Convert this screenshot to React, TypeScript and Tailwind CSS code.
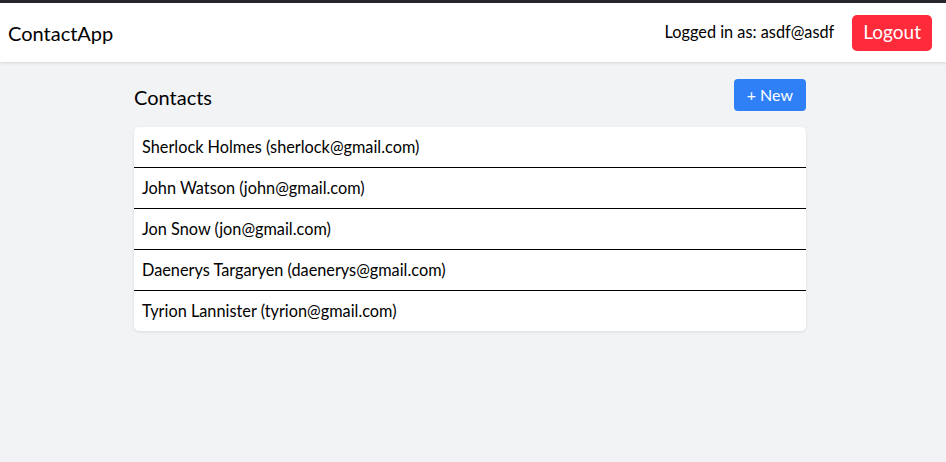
export default function App() {
  const contacts = [
    { name: 'Sherlock Holmes', email: 'sherlock@gmail.com' },
    { name: 'John Watson', email: 'john@gmail.com' },
    { name: 'Jon Snow', email: 'jon@gmail.com' },
    { name: 'Daenerys Targaryen', email: 'daenerys@gmail.com' },
    { name: 'Tyrion Lannister', email: 'tyrion@gmail.com' },
  ]

  return (
    <div className="min-h-[462px] bg-[#f2f3f5] font-['Lato',sans-serif] text-black">
      <div className="h-[3px] bg-[#26262c]" />
      <header className="flex h-[59px] items-center justify-between bg-white pl-2 pr-[14px] shadow-[0_1px_3px_rgba(0,0,0,0.12)]">
        <span className="text-[20px]">ContactApp</span>
        <div className="flex items-center gap-[18px]">
          <span className="text-[16.3px]">Logged in as: asdf@asdf</span>
          <button className="h-[36px] rounded-[5px] bg-[#ff2b3b] px-[11px] text-[19px] text-white">Logout</button>
        </div>
      </header>

      <main className="ml-[134px] w-[672px] pt-[17px]">
        <div className="flex h-[32px] items-start justify-between">
          <h1 className="pt-[5px] text-[20px] leading-[27px]">Contacts</h1>
          <button className="h-[32px] rounded-[4px] bg-[#2f80f7] px-[13px] text-[16px] text-white">+ New</button>
        </div>
        <ul className="mt-4 overflow-hidden rounded-[5px] bg-white shadow-[0_1px_3px_rgba(0,0,0,0.1)]">
          {contacts.map((c, i) => (
            <li
              key={i}
              className={`flex items-center px-2 text-[16.3px] ${i > 0 ? 'h-[41px] border-t border-black' : 'h-[40px]'}`}
            >
              {c.name} ({c.email})
            </li>
          ))}
        </ul>
      </main>
    </div>
  )
}
